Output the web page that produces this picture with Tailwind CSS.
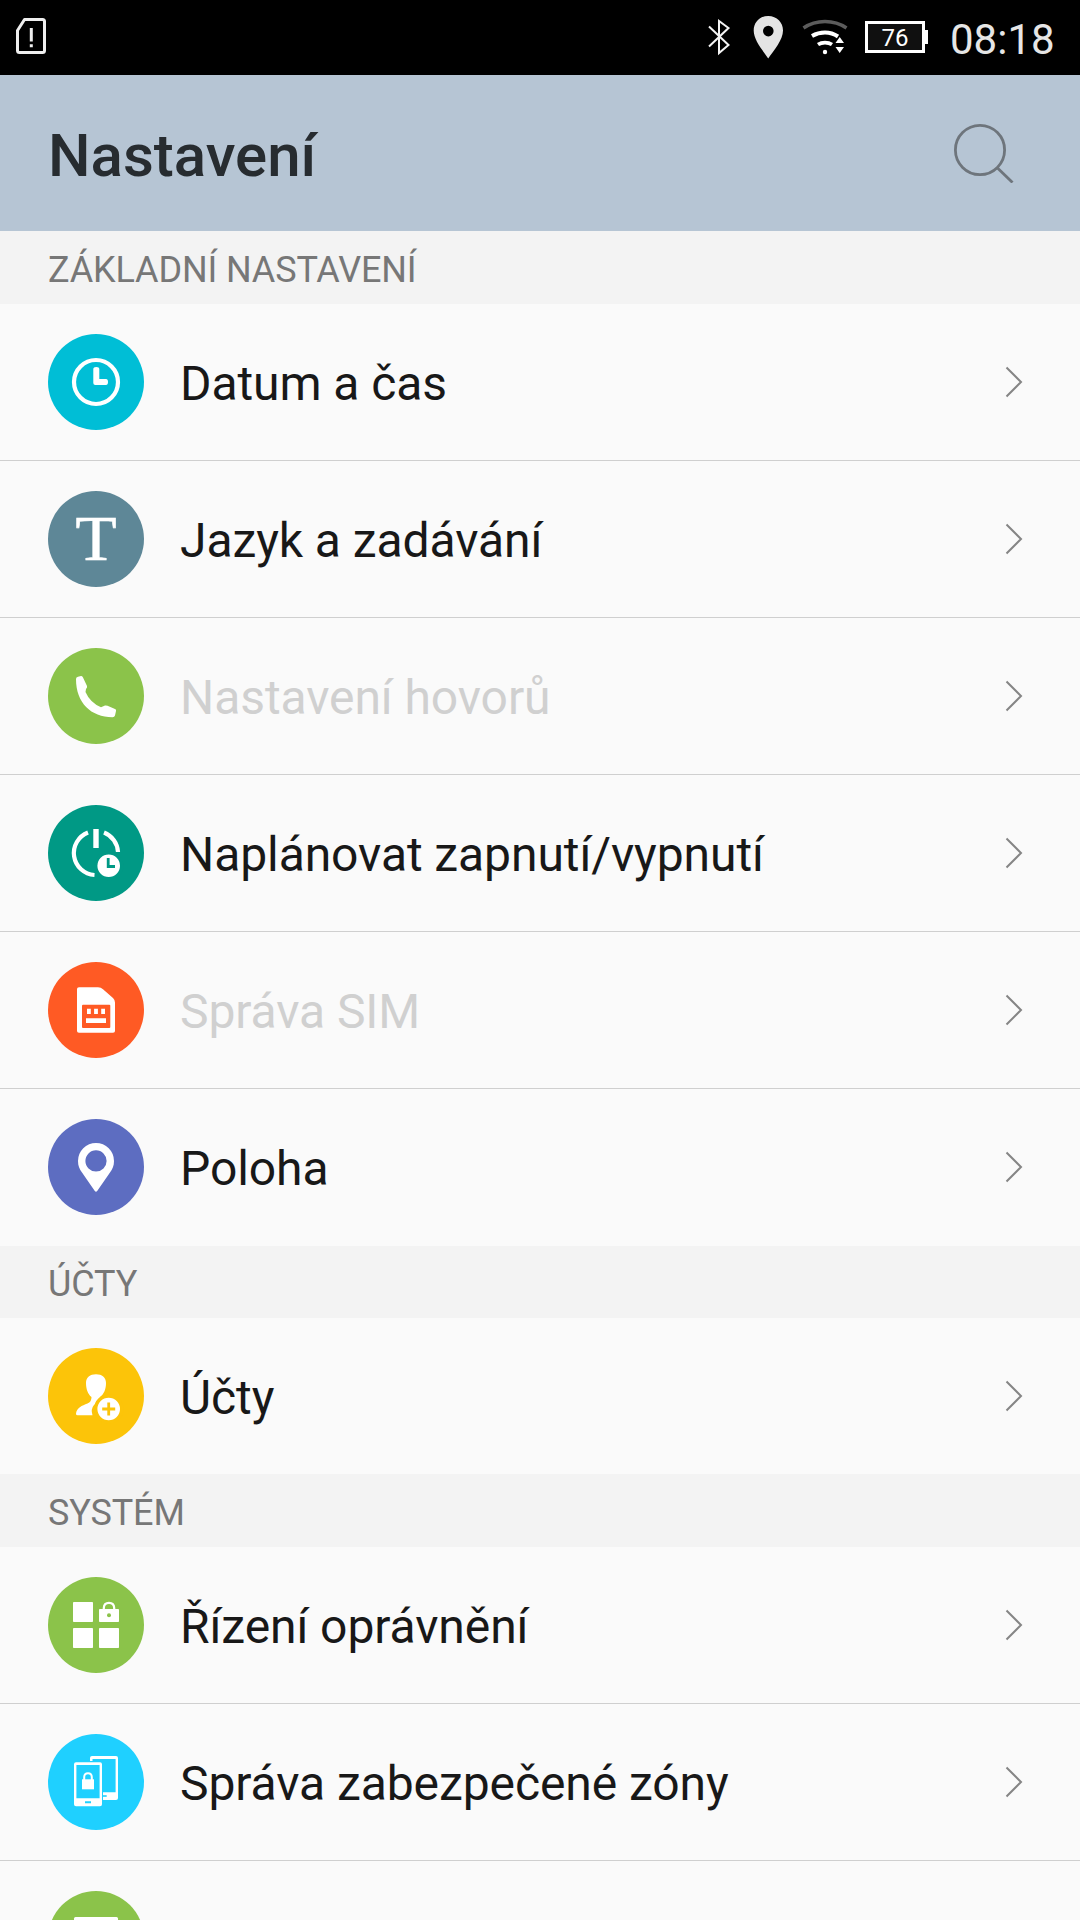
<!DOCTYPE html>
<html lang="cs">
<head>
  <meta charset="UTF-8">
  <meta name="viewport" content="width=device-width, initial-scale=1.0">
  <title>Nastavení</title>
  <script src="https://cdn.jsdelivr.net/npm/@tailwindcss/browser@4"></script>
</head>
<body class="w-[1080px] h-[1920px] overflow-hidden bg-[#fafafa] font-['Roboto',sans-serif] text-[#181818]">
  <svg class="hidden">
    <symbol id="chevron" viewBox="0 0 18 32">
      <path d="M1.5 1.5L16 16L1.5 30.5" fill="none" stroke="#858585" stroke-width="2" />
    </symbol>
  </svg>

  <!-- Status bar -->
  <div class="h-[75px] bg-black flex items-start justify-between pl-4 pr-6">
    <svg class="w-[31px] h-[75px]" viewBox="0 0 31 75" fill="none" stroke="#efefef" stroke-width="3">
      <path d="M8.5 19.5H26.5Q28.5 19.5 28.5 21.5V50.5Q28.5 52.5 26.5 52.5H3.5Q1.5 52.5 1.5 50.5V30.5Z" stroke-linejoin="round" />
      <path d="M15.3 28V41.5M15.3 44.3V47.2" />
    </svg>
    <div class="flex items-start text-[#e6e6e6]">
      <svg class="w-[23px] h-[75px] mr-[22px]" viewBox="0 0 23 75" fill="none" stroke="#f4f4f4" stroke-width="2">
        <path d="M1 26.5L20.5 45L11 53V21L20.5 28L1 46.5" />
      </svg>
      <svg class="w-[30px] h-[75px] mr-[19px]" viewBox="0 0 30 75" fill="#e4e4e4">
        <path fill-rule="evenodd" d="M15.2 16C6.5 16 .7 22.5 .7 30.5C.7 40 9.5 50 15.2 58.5C21 50 30 40 30 30.5C30 22.5 24 16 15.2 16ZM15.3 25.8A5.3 5.3 0 1 1 15.3 36.4A5.3 5.3 0 0 1 15.3 25.8Z" />
      </svg>
      <svg class="w-[46px] h-[75px] mr-[17px]" viewBox="0 0 46 75" fill="none">
        <path d="M1.5 28Q11 21.5 23 21.5T44.5 28" stroke="#5c5c5c" stroke-width="3.4" />
        <path d="M10 36Q16 32.5 23 32.5T36 36.5" stroke="#fff" stroke-width="4" />
        <path d="M16 44.5Q19 42.6 23 42.6T30 44.5" stroke="#fff" stroke-width="3.8" />
        <circle cx="23" cy="52" r="2.2" fill="#fff" />
        <path d="M37.7 37L42 43H33.5ZM37.7 53L42 47H33.5Z" fill="#fff" />
      </svg>
      <div class="mt-[21px] mr-[22px] flex items-center">
        <div class="w-[60px] h-8 border-[3px] border-white bg-[#101010] text-white text-2xl leading-none flex items-center justify-center pt-0.5">76</div>
        <div class="w-[3px] h-[14px] bg-white"></div>
      </div>
      <div class="text-[42px] leading-[80px] w-[106px]">08:18</div>
    </div>
  </div>

  <!-- Title bar -->
  <header class="h-[156px] bg-[#b6c5d4] flex items-center justify-between pl-12 pr-16">
    <h1 class="text-[60px] leading-none font-medium text-[#272c30] pt-1.5">Nastavení</h1>
    <svg class="w-[62px] h-[60px]" viewBox="0 0 62 60" fill="none" stroke="#6e757c" stroke-width="2.8">
      <circle cx="26" cy="27" r="24.6" />
      <path d="M43.5 45L58.500 59.500" />
    </svg>
  </header>

  <h2 class="h-[73px] bg-[#f3f3f3] pl-12 text-4xl leading-[79px] tracking-[-0.13px] text-[#777]">ZÁKLADNÍ NASTAVENÍ</h2>
  <ul class="divide-y divide-[#cfcfcf] text-5xl tracking-[-0.08px]">
    <li class="flex items-center h-[157px] pl-12 pr-[57px]">
      <svg class="w-24 h-24 mr-9" viewBox="0 0 96 96">
        <circle cx="48" cy="48" r="48" fill="#00bed6" />
        <circle cx="48" cy="48" r="22" fill="none" stroke="#fff" stroke-width="4.2" />
        <path d="M45.3 35Q45.3 33 48.3 33T51.3 35V45H58Q60 45 60 48T58 51H47.3Q45.3 51 45.3 49Z" fill="#fff" />
      </svg>
      <span class="flex-1 pt-1">Datum a čas</span>
      <svg class="w-[18px] h-8"><use href="#chevron" /></svg>
    </li>
    <li class="flex items-center h-[157px] pl-12 pr-[57px]">
      <svg class="w-24 h-24 mr-9" viewBox="0 0 96 96">
        <circle cx="48" cy="48" r="48" fill="#5e8797" />
        <text x="48" y="69" text-anchor="middle" textLength="41" lengthAdjust="spacingAndGlyphs" font-family="Liberation Serif, serif" font-size="64" fill="#fff" stroke="#fff" stroke-width=".6">T</text>
      </svg>
      <span class="flex-1 pt-1">Jazyk a zadávání</span>
      <svg class="w-[18px] h-8"><use href="#chevron" /></svg>
    </li>
    <li class="flex items-center h-[157px] pl-12 pr-[57px]">
      <svg class="w-24 h-24 mr-9" viewBox="0 0 96 96">
        <circle cx="48" cy="48" r="48" fill="#8bc34a" />
        <path d="M28 31Q28 29 30 28.7L33 28Q34.5 27.8 35 29.5L39 38Q39.5 39.5 38 41L37.5 44Q42 54.5 53 59.3L57 57.5Q58 57.2 59.5 57.8L67 61Q68.500 61.5 68 63L67 67.5Q66.5 69.3 64.5 69.3C43 69 28 55 28 31Z" fill="#fff" />
      </svg>
      <span class="flex-1 pt-1 text-[#d0d0d0]">Nastavení hovorů</span>
      <svg class="w-[18px] h-8"><use href="#chevron" /></svg>
    </li>
    <li class="flex items-center h-[157px] pl-12 pr-[57px]">
      <svg class="w-24 h-24 mr-9" viewBox="0 0 96 96">
        <circle cx="48" cy="48" r="48" fill="#009985" />
        <path d="M40 27.5A22 22 0 0 0 46.5 70M56 27.5A22 22 0 0 1 70 47" fill="none" stroke="#fff" stroke-width="4.2" />
        <path d="M48 24V43" stroke="#fff" stroke-width="5.4" />
        <circle cx="60.7" cy="60.7" r="13" fill="#fff" stroke="#009985" stroke-width="3.4" />
        <path d="M60.2 53V61.5H67" fill="none" stroke="#009985" stroke-width="2.8" />
      </svg>
      <span class="flex-1 pt-1">Naplánovat zapnutí/vypnutí</span>
      <svg class="w-[18px] h-8"><use href="#chevron" /></svg>
    </li>
    <li class="flex items-center h-[157px] pl-12 pr-[57px]">
      <svg class="w-24 h-24 mr-9" viewBox="0 0 96 96">
        <circle cx="48" cy="48" r="48" fill="#ff5a24" />
        <path d="M31 25.3H50Q53 25.3 55 27.2L65 36Q67 38 67 40.5V69Q67 70.7 65 70.7H31Q29 70.7 29 69V27Q29 25.3 31 25.3Z" fill="#fff" />
        <rect x="34" y="42.7" width="28.3" height="23.3" rx="1" fill="#ff5a24" />
        <path d="M39 46.7h3.8V52H39ZM46.1 46.7h3.8V52h-3.8ZM53.2 46.7H57V52h-3.8ZM38 56.3H58V61H38Z" fill="#fff" />
      </svg>
      <span class="flex-1 pt-1 text-[#d0d0d0]">Správa SIM</span>
      <svg class="w-[18px] h-8"><use href="#chevron" /></svg>
    </li>
    <li class="flex items-center h-[157px] pl-12 pr-[57px] pb-px">
      <svg class="w-24 h-24 mr-9" viewBox="0 0 96 96">
        <circle cx="48" cy="48" r="48" fill="#5d6dc1" />
        <path fill-rule="evenodd" d="M48 24A18 18 0 0 0 30 42C30 47 31.5 50 34 53.5L46.8 72Q48 73.5 49.2 72L62 53.5C64.5 50 66 47 66 42A18 18 0 0 0 48 24ZM48 31.3A10.6 10.6 0 1 1 48 52.5A10.6 10.6 0 0 1 48 31.3Z" fill="#fff" />
      </svg>
      <span class="flex-1 pt-1">Poloha</span>
      <svg class="w-[18px] h-8"><use href="#chevron" /></svg>
    </li>
  </ul>

  <h2 class="h-[72px] bg-[#f3f3f3] pl-12 text-4xl leading-[77px] tracking-[-0.13px] text-[#777]">ÚČTY</h2>
  <ul class="text-5xl tracking-[-0.08px]">
    <li class="flex items-center h-[156px] pl-12 pr-[57px]">
      <svg class="w-24 h-24 mr-9" viewBox="0 0 96 96">
        <circle cx="48" cy="48" r="48" fill="#fcc409" />
        <path d="M48 26.3C54 26.3 58 29.5 58 35C58 41 56 46 52 49Q49.5 55 46 57Q42.5 61 44.5 67.3H29.5Q28 67.3 28 65.8C28.5 60 34 57.5 39.5 55.5Q43.5 54 43.5 49C40 46.5 38 41 38 35C38 29.5 42 26.3 48 26.3Z" fill="#fff" />
        <circle cx="60.7" cy="61" r="13" fill="#fff" stroke="#fcc409" stroke-width="3.4" />
        <path d="M60.7 54.5V67.5M54.2 61H67.2" stroke="#fcc409" stroke-width="2.8" />
      </svg>
      <span class="flex-1 pt-1">Účty</span>
      <svg class="w-[18px] h-8"><use href="#chevron" /></svg>
    </li>
  </ul>

  <h2 class="h-[73px] bg-[#f3f3f3] pl-12 text-4xl leading-[78px] tracking-[-0.13px] text-[#777]">SYSTÉM</h2>
  <ul class="divide-y divide-[#cfcfcf] text-5xl tracking-[-0.08px]">
    <li class="flex items-center h-[157px] pl-12 pr-[57px]">
      <svg class="w-24 h-24 mr-9" viewBox="0 0 96 96">
        <circle cx="48" cy="48" r="48" fill="#8bc34a" />
        <g fill="#fff">
          <rect x="25" y="25" width="20" height="20" rx=".8" />
          <rect x="25" y="51" width="20" height="20" rx=".8" />
          <rect x="51" y="51" width="20" height="20" rx=".8" />
          <rect x="51" y="32" width="20" height="13" rx=".8" />
        </g>
        <path d="M55.8 33V31Q56 25.8 61 25.8T66.2 31V33" fill="none" stroke="#fff" stroke-width="2.2" />
        <circle cx="61" cy="38.3" r="2" fill="#8bc34a" />
      </svg>
      <span class="flex-1 pt-1">Řízení oprávnění</span>
      <svg class="w-[18px] h-8"><use href="#chevron" /></svg>
    </li>
    <li class="flex items-center h-[157px] pl-12 pr-[57px]">
      <svg class="w-24 h-24 mr-9" viewBox="0 0 96 96">
        <circle cx="48" cy="48" r="48" fill="#1fd0ff" />
        <path fill-rule="evenodd" d="M42 27V24Q42 22 44 22H68Q70 22 70 24V64Q70 66 68 66H55V58.3H67.6V25H44.5V27Z" fill="#fff" />
        <path d="M55 62H58.7" stroke="#1fd0ff" stroke-width="1.6" />
        <path fill-rule="evenodd" d="M28 28.3H52Q54 28.3 54 30.3V70.3Q54 72.3 52 72.3H28Q26 72.3 26 70.3V30.3Q26 28.3 28 28.3ZM28.4 31V64.3H51.6V31ZM37 67.2V69.2H43V67.2Z" fill="#fff" />
        <rect x="34" y="45.3" width="12" height="10" fill="#fff" />
        <path d="M36.2 46V43Q36.3 39.3 40 39.3T43.8 43V46" fill="none" stroke="#fff" stroke-width="2" />
      </svg>
      <span class="flex-1 pt-1">Správa zabezpečené zóny</span>
      <svg class="w-[18px] h-8"><use href="#chevron" /></svg>
    </li>
    <li class="flex items-center h-[157px] pl-12 pr-[57px] pb-px">
      <svg class="w-24 h-24 mr-9" viewBox="0 0 96 96">
        <circle cx="48" cy="48" r="48" fill="#8bc34a" />
        <rect x="26" y="26" width="44" height="44" rx="1.5" fill="#fff" />
      </svg>
    </li>
  </ul>
</body>
</html>
